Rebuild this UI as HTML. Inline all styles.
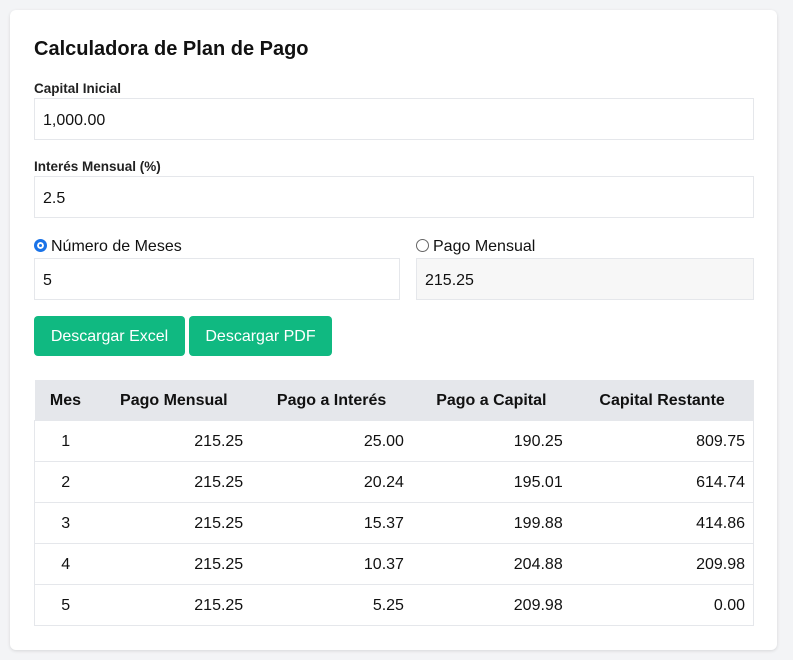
<!DOCTYPE html>
<html><head><meta charset="utf-8"><style>
*{box-sizing:border-box;margin:0;padding:0}
body{width:793px;height:660px;background:#f3f4f6;font-family:"Liberation Sans",sans-serif;color:#111;position:relative;overflow:hidden}
.card{position:absolute;left:10px;top:10px;width:767px;height:640px;background:#fff;border-radius:6px;box-shadow:0 1px 3px rgba(0,0,0,.12)}
.a{position:absolute}
h1{position:absolute;left:24px;top:28px;font-size:20px;font-weight:bold}
.lbl{font-size:13.5px;font-weight:bold;color:#222}
.inp{position:absolute;height:42px;border:1px solid #e5e7eb;font-size:16px;padding:2px 8px 0;line-height:40px;background:#fff}
.btn{position:absolute;top:306px;height:40px;background:#10b981;color:#fff;border-radius:4px;font-size:16px;line-height:42px;text-align:center}
.radio{display:inline-block;width:13px;height:13px;border-radius:50%;vertical-align:-1px;margin-right:4px}
table{position:absolute;left:24px;top:370px;width:720px;border-collapse:collapse;font-size:16px}
th{background:#e5e7eb;height:40px;padding-top:3px;font-weight:bold;text-align:center}
td{height:41px;padding-top:2px;text-align:right;padding-right:8px;border-top:1px solid #e5e7eb}
td:first-child{text-align:center;padding-right:0}
tbody{border:1px solid #e5e7eb}
</style></head><body>
<div class="card">
<h1>Calculadora de Plan de Pago</h1>
<div class="a lbl" style="left:24px;top:71px">Capital Inicial</div>
<div class="inp" style="left:24px;top:88px;width:720px">1,000.00</div>
<div class="a lbl" style="left:24px;top:149px">Interés Mensual (%)</div>
<div class="inp" style="left:24px;top:166px;width:720px">2.5</div>
<div class="a" style="left:24px;top:228px;font-size:16px"><span class="radio" style="border:3px solid #1a73e8;box-shadow:inset 0 0 0 2px #fff;background:#1a73e8"></span>Número de Meses</div>
<div class="a" style="left:406px;top:228px;font-size:16px"><span class="radio" style="border:1px solid #666"></span>Pago Mensual</div>
<div class="inp" style="left:24px;top:248px;width:366px">5</div>
<div class="inp" style="left:406px;top:248px;width:338px;background:#f7f7f7">215.25</div>
<div class="btn" style="left:24px;width:151px">Descargar Excel</div>
<div class="btn" style="left:179px;width:143px">Descargar PDF</div>
<table>
<colgroup><col style="width:62px"><col style="width:155px"><col style="width:161px"><col style="width:159px"><col style="width:183px"></colgroup>
<thead><tr><th>Mes</th><th>Pago Mensual</th><th>Pago a Interés</th><th>Pago a Capital</th><th>Capital Restante</th></tr></thead>
<tbody>
<tr><td>1</td><td>215.25</td><td>25.00</td><td>190.25</td><td>809.75</td></tr>
<tr><td>2</td><td>215.25</td><td>20.24</td><td>195.01</td><td>614.74</td></tr>
<tr><td>3</td><td>215.25</td><td>15.37</td><td>199.88</td><td>414.86</td></tr>
<tr><td>4</td><td>215.25</td><td>10.37</td><td>204.88</td><td>209.98</td></tr>
<tr><td>5</td><td>215.25</td><td>5.25</td><td>209.98</td><td>0.00</td></tr>
</tbody></table>
</div>
</body></html>
